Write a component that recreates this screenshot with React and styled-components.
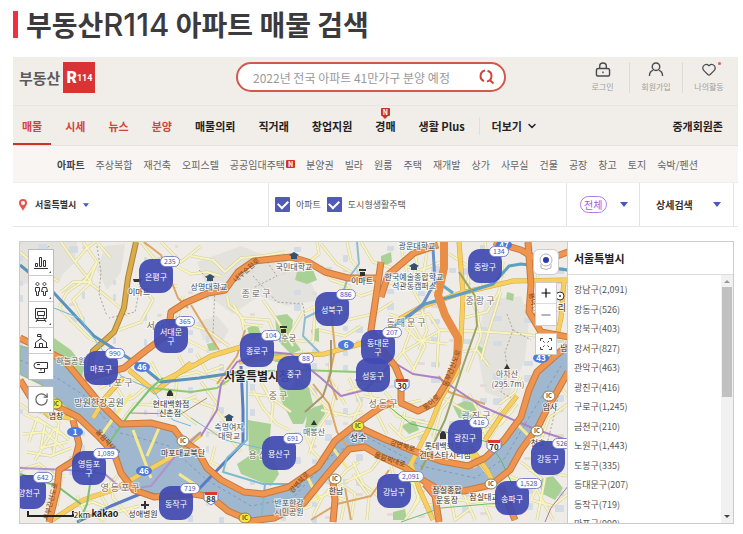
import React from 'react';
import styled, { createGlobalStyle } from 'styled-components';
import { Heart, ChevronDown, Plus, Minus, RotateCw } from 'lucide-react';

const subMenu = ['주상복합', '재건축', '오피스텔', '공공임대주택', '분양권', '빌라', '원룸', '주택', '재개발', '상가', '사무실', '건물', '공장', '창고', '토지', '숙박/펜션'];

const tabs = [
    { name: '매물', hot: true, active: true },
    { name: '시세', hot: true },
    { name: '뉴스', hot: true },
    { name: '분양', hot: true },
    { name: '매물의뢰' },
    { name: '직거래' },
    { name: '창업지원' },
    { name: '경매', isNew: true },
    { name: '생활 Plus' },
];

const districts = [
    ['강남구', '2,091'], ['강동구', '526'], ['강북구', '403'], ['강서구', '827'], ['관악구', '463'],
    ['광진구', '416'], ['구로구', '1,245'], ['금천구', '210'], ['노원구', '1,443'], ['도봉구', '335'],
    ['동대문구', '207'], ['동작구', '719'], ['마포구', '990'],
];

// x, y are the top left corner of the marker on the map
const markers = [
    { name: '은평구', count: '235', x: 119, y: 17 },
    { name: '서대문구', count: '365', x: 134, y: 77 },
    { name: '마포구', count: '990', x: 64, y: 109 },
    { name: '성북구', count: '886', x: 295, y: 50 },
    { name: '종로구', count: '104', x: 220, y: 91 },
    { name: '중구', count: '88', x: 257, y: 114 },
    { name: '성동구', x: 336, y: 116 },
    { name: '동대문구', count: '207', x: 341, y: 88 },
    { name: '중랑구', count: '134', x: 448, y: 7 },
    { name: '영등포구', count: '1,089', x: 52, y: 209 },
    { name: '양천구', count: '642', x: -8, y: 233 },
    { name: '동작구', count: '719', x: 139, y: 244 },
    { name: '용산구', count: '691', x: 242, y: 194 },
    { name: '광진구', count: '416', x: 428, y: 178 },
    { name: '강동구', count: '526', x: 511, y: 199 },
    { name: '강남구', count: '2,091', x: 357, y: 232 },
    { name: '송파구', count: '1,528', x: 475, y: 239 },
];

const parks = [
    'M53 338L70 350L84 368L80 378L56 362L50 352Z',
    'M247 420L270 424L268 448L278 474L270 486L240 474L236 464L248 456Z',
    'M296 378L308 388L312 404L302 424L292 424L280 400L278 384L290 388Z',
    'M274 316L286 314L292 320L290 336L300 350L290 354L276 340Z',
    'M246 328L256 324L260 334L250 340Z',
    'M296 272L312 270L316 280L306 284L294 280Z',
    'M307 410L322 404L324 414L312 432L304 428Z',
    'M452 406L464 401L477 404L472 418L458 418Z',
    'M536 480L552 476L562 488L554 500L542 494Z',
    'M380 256L390 252L391 262L384 266L380 264Z',
    'M506 292L513 294L512 301L505 299Z',
    'M477 345L484 350L482 355L477 352Z',
    'M392 512L404 509L406 520L392 520Z',
    'M88 422L102 424L110 432L100 438L90 432Z',
    'M400 426L414 420L418 430L408 434Z',
    'M206 344L214 342L216 350L208 351Z',
    'M176 488L188 482L190 490L180 494Z',
    'M270 354L280 352L284 362L274 362Z',
    'M310 330L318 328L318 342L312 340Z',
    'M438 458L452 460L470 466L456 470L440 464Z',
];

const hills = [
    'M19 242L76 242L74 262L62 274L58 282L19 284Z',
    'M196 262L240 246L280 262L306 274L318 300L286 306L258 296L232 314L210 298Z',
    'M484 300L520 296L528 320L524 360L506 400L484 392L476 350Z',
    'M104 246L124 244L120 272L106 290L96 270Z',
    'M196 322L216 316L228 330L220 344L202 340Z',
];

const river = 'M19 346L42 352L62 364L78 380L98 402L120 424L150 425L172 431L182 444L194 452L204 468L220 482L243 493L260 494L288 488L316 468L334 441L356 426L382 438L412 451L442 461L467 467L484 459L503 441L520 417L527 392L534 374L545 362L567 348V375L556 390L546 408L536 428L519 452L509 470L490 485L463 490L437 488L422 480L403 467L380 457L362 447L350 450L324 477L303 503L273 517L250 519L227 510L210 496L190 494L153 496L133 488L121 472L113 452L97 434L77 415L53 396L40 384L19 374Z';

const lanes = [
    'M60 242L74 262L90 282L72 300L82 320', 'M74 262L86 248L94 242', 'M82 242L96 262L88 282L110 300L128 316', 'M96 262L84 280L66 292L58 308',
    'M110 258L96 242', 'M88 282L72 282L60 292', 'M58 308L88 338L104 346', 'M118 330L140 322L152 300L140 284L150 262', 'M140 242L156 262L150 284L176 286',
    'M160 242L180 262L200 246', 'M168 262L190 274L206 272L220 276', 'M19 252L40 270L58 282', 'M182 296L176 320L186 340L206 350', 'M190 325L206 330L228 346',
    'M190 256L212 260L224 272L240 258L262 256L284 252', 'M226 296L228 306L240 316L244 334', 'M232 304L244 324L262 326', 'M316 242L318 254L308 262', 'M320 266L330 280L348 286L342 318',
    'M262 300L276 320L292 346', 'M290 340L312 342L314 308L326 296', 'M288 336L302 312L320 304', 'M300 350L304 380L318 400L336 416', 'M330 350L328 378L344 404', 'M240 318L268 320L276 340',
    'M340 286L360 296L378 290', 'M346 320L372 314L392 302', 'M320 244L336 264L350 272', 'M346 242L350 260L364 276', 'M360 242L372 262L392 268', 'M318 330L344 336L360 326',
    'M388 314L410 322L424 346L410 374', 'M398 320L416 340L446 344', 'M386 370L402 352L440 330L478 332', 'M404 318L428 314L438 330L436 368', 'M410 330L402 352L414 370',
    'M420 306L426 330L418 350', 'M386 284L414 278L436 286', 'M396 264L420 270L440 262', 'M412 242L416 264L410 286L420 304', 'M400 248L406 272', 'M426 252L422 276L434 292',
    'M462 318L486 312L498 292L502 262', 'M466 292L476 312L480 336L466 372', 'M458 330L520 334L567 340', 'M484 242L486 258L504 276', 'M500 292L488 330L480 360',
    'M536 272L540 300L560 312', 'M458 352L476 350L488 366', 'M448 254L470 268L484 286', 'M470 256L466 290',
    'M23 414L44 424L40 448L66 442', 'M28 442L36 418L60 434', 'M34 460L54 428L68 440', 'M22 434L44 432L62 448', 'M26 452L50 456L70 448', 'M40 412L58 422L52 456',
    'M19 470L38 464L60 480L56 506', 'M36 506L42 480L64 476', 'M76 496L84 512L104 520', 'M66 508L92 502L116 512L138 506', 'M98 492L106 506L100 522', 'M110 478L112 498L132 520',
    'M116 476L104 492L88 496', 'M118 446L134 448L156 472L184 492', 'M130 442L148 460L134 480', 'M140 438L170 474L160 490', 'M122 450L166 458L148 478', 'M126 460L158 466',
    'M98 388L122 378L150 386L176 378', 'M108 406L132 398L148 384', 'M122 420L134 404L170 406L196 396', 'M150 400L170 418L166 388', 'M176 382L172 406L196 424', 'M112 380L124 402',
    'M192 400L214 408L232 430L240 426', 'M200 382L216 404L210 420', 'M206 430L230 440L240 452', 'M214 446L210 462L226 470', 'M252 390L262 408L276 424L288 430', 'M248 394L268 396L290 412',
    'M260 382L272 404L270 422', 'M304 434L312 452L322 462', 'M336 386L330 410L316 430L308 454', 'M320 410L348 416L362 412', 'M346 392L366 386L372 400', 'M348 378L360 404L352 420',
    'M362 396L382 400L396 416L430 424', 'M374 410L386 434', 'M384 392L396 406L420 400', 'M388 424L404 440L424 432', 'M404 412L398 436',
    'M276 500L290 514L310 506', 'M304 504L326 494L344 500L340 520', 'M312 516L322 496L340 482', 'M326 492L346 470L358 462', 'M340 484L354 494L350 520', 'M352 462L362 484L380 498', 'M344 482L370 470L378 460',
    'M366 520L368 496L352 474', 'M390 466L394 480L414 484', 'M410 474L418 500L404 520', 'M432 488L440 520', 'M448 490L454 520L470 508', 'M462 492L474 520', 'M422 506L460 500L494 506', 'M470 490L484 506L490 520', 'M420 492L410 512',
    'M436 394L466 412L490 418', 'M468 394L478 412L486 440', 'M480 432L500 424L516 404', 'M484 446L496 426L512 410', 'M496 430L486 424L500 408', 'M498 404L514 392L520 376', 'M454 392L440 410L432 438', 'M474 420L480 448',
    'M567 404L548 418L540 440', 'M560 388L567 396', 'M520 462L540 478L530 500', 'M528 470L567 476', 'M530 500L552 506L567 494', 'M508 476L534 486L552 520', 'M544 478L536 520', 'M19 404L30 412',
    'M100 360L96 384', 'M150 362L160 380L196 372L226 384', 'M178 356L186 372', 'M196 354L206 372L222 366',
];

const yellowRoads = [
    'M160 382L190 367L210 356L240 347', 'M238 362L290 356L323 354L352 346L380 338L400 318L420 307L460 293L512 281L567 280',
    'M458 242L462 294L460 340L456 372L440 398L430 424L410 464L418 488L432 520', 'M563 281L560 318L556 336', 'M190 363L154 392L140 380L128 370',
    'M122 378L104 398L92 418', 'M200 434L172 456L140 474L112 490L82 500L48 522', 'M474 468L470 448L486 470L494 486', 'M516 396L500 416L484 440',
    'M36 402L48 416L70 418',
];

const orangeRoads = [
    'M19 338L43 350L63 360L78 378L97 401L120 424L150 423L173 429L182 441L196 450L206 468L220 480L243 492L262 494L288 487L317 467L334 441L357 423L380 407L392 402',
    'M355 426L381 438L410 450L440 461L467 466L484 458L503 440L520 417L528 390L536 372L552 358L567 345',
    'M19 380L30 398L53 405L77 417L98 437L113 453L120 473L133 490L153 497L193 494L210 497L227 511L250 521L273 518L303 503L324 477L348 449L364 447L381 457L403 467L423 481L437 489L463 491L490 485L509 470L520 450L537 427L547 407L557 390L567 372',
    'M84 378L123 368L143 352L167 334L170 312L184 303L207 293L224 290L237 272L253 261L290 257L307 262L324 272L347 278L380 278',
    'M380 262L376 290L370 330L378 346L394 366L400 380L400 403L417 411L433 403L446 382L456 362L457 338L444 315L437 295L443 268L443 242',
    'M380 297L387 275L413 253L437 245', 'M527 242L530 285L528 312L540 332L567 337', 'M493 242L520 250L540 262L567 252',
    'M72 420L78 444L74 460L58 470L56 490L48 522', 'M332 482L334 500L332 522', 'M424 484L434 496L438 522', 'M500 486L514 520',
];

const thinRoads = [
    'M143 242L160 255L177 298L187 308', 'M190 305L204 328L218 350', 'M312 384L328 404L336 432L350 452', 'M244 330L236 356L216 384', 'M286 372L300 384',
    'M336 400L328 378L334 350L330 310', 'M354 380L380 382', 'M310 520L336 504L370 496L388 470', 'M344 488L350 520', 'M438 376L448 392L484 404',
];

const railways = [
    { d: 'M19 265L53 293L93 336L143 368L160 382L198 378L240 372', color: '#5c93b8', w: 3 },
    { d: 'M53 308L78 318L100 348L120 376L152 390L172 420L190 426', color: '#6fbbe6', w: 1 },
    { d: 'M567 270L520 264L508 266L492 284L460 294L424 304L404 318L384 332', color: '#5f9fc0', w: 3 },
    { d: 'M432 248L434 282L422 304L406 318', color: '#6c91c9', w: 3 },
    { d: 'M434 280L452 293', color: '#64a8c8', w: 3 },
    { d: 'M240 366L242 410L242 443L223 463L197 490', color: '#5b7cc4', w: 3 },
    { d: 'M246 380L246 440L226 458L222 472L262 484L300 484', color: '#7fbad0', w: 2 },
    { d: 'M264 484L260 522', color: '#84b9ce', w: 2 },
    { d: 'M356 242L358 264L346 280L340 300L304 318L302 336L318 352', color: '#8fbccb', w: 2 },
    { d: 'M76 522L110 506L144 492L170 500', color: '#5b7cc4', w: 3 },
    { d: 'M190 418L224 440L268 450', color: '#7ab8d6', w: 1 },
    { d: 'M162 378L150 388L128 414L110 440L90 478L86 504L78 522', color: '#7bc274', w: 2 },
    { d: 'M19 474L56 486L80 504', color: '#77bd70', w: 2 },
    { d: 'M150 388L190 392L216 388L240 372L300 370L356 372', color: '#8ecb6c', w: 2 },
    { d: 'M382 402L410 424L487 442L500 460L512 486', color: '#5fb964', w: 1 },
    { d: 'M400 522L440 508L510 502', color: '#6fbf72', w: 1 },
    { d: 'M200 436L216 410L220 384L236 362L268 352L290 354L320 378L340 396L364 390L392 362L412 374L438 378L480 406L536 430L567 440', color: '#ab83c5', w: 2 },
    { d: 'M19 468L68 470L104 474L122 490L150 486L176 454L200 432', color: '#b093c9', w: 2 },
    { d: 'M567 486L550 508L544 522', color: '#a678a8', w: 1 },
    { d: 'M458 272L474 296L476 326L462 366L444 420L420 470', color: '#9aa36a', w: 2 },
    { d: 'M330 340L330 372L322 396L304 412', color: '#a6956e', w: 2 },
    { d: 'M130 413L180 414L206 398', color: '#a88e70', w: 1 },
];

const trails = [
    'M96 246L100 272L98 294L106 316', 'M140 282L134 312L108 318', 'M198 270L214 286L212 334', 'M252 276L276 302L302 304L304 318', 'M506 314L512 330L504 352L506 366',
    'M512 330L530 340', 'M266 262L276 276L252 288', 'M48 246L34 262L40 282', 'M559 388L552 420L544 452', 'M508 368L500 392L510 398',
];

const riverBorder = 'M19 360L50 374L84 396L116 432L168 446L206 480L250 506L292 498L330 456L364 436L420 466L474 478L504 458L530 414L560 366';

const bridges = 'M98 438L130 394M150 478L132 430M146 456L158 428M178 474L196 486M318 500L306 476M346 468L332 448M408 466L416 452M494 484L478 462M530 438L516 424';

const schoolColor = '#39516f';
const guColor = '#77706c';
const hillColor = '#66645f';
const parkColor = '#49605c';

const places = [
    { t: '국민대학교', x: 293, y: 270, c: schoolColor },
    { t: '상명대학교', x: 208, y: 290, c: schoolColor },
    { t: '광운대학교', x: 416, y: 249, c: schoolColor },
    { t: '한국예술종합학교', x: 413, y: 280, c: schoolColor },
    { t: '석관동캠퍼스', x: 413, y: 289, c: schoolColor },
    { t: '숙명여자', x: 228, y: 430, c: schoolColor },
    { t: '대학교', x: 228, y: 439, c: schoolColor },
    { t: '이마트', x: 138, y: 295 },
    { t: '이마트', x: 361, y: 284 },
    { t: '종 로 구', x: 255, y: 297, c: guColor, s: 9 },
    { t: '중 랑 구', x: 479, y: 304, c: guColor, s: 9 },
    { t: '동 대 문 구', x: 405, y: 326, c: guColor, s: 9 },
    { t: '서 대 문 구', x: 165, y: 329, c: guColor, s: 9 },
    { t: '마 포 구', x: 117, y: 386, c: guColor, s: 9 },
    { t: '영 등 포 구', x: 119, y: 491, c: guColor, s: 9 },
    { t: '중 구', x: 277, y: 399, c: guColor, s: 9 },
    { t: '용 산 구', x: 262, y: 458, c: guColor, s: 9 },
    { t: '성 동 구', x: 382, y: 407, c: guColor, s: 9 },
    { t: '광 진 구', x: 475, y: 419, c: guColor, s: 9 },
    { t: '덕수궁', x: 284, y: 341, c: '#665f58' },
    { t: '아차산', x: 506, y: 377, c: hillColor },
    { t: '(295.7m)', x: 507, y: 387, c: hillColor },
    { t: '매봉산', x: 313, y: 435, c: hillColor },
    { t: '하늘공원', x: 70, y: 364, c: hillColor },
    { t: '망원한강공원', x: 98, y: 406, c: parkColor, s: 9 },
    { t: '염창', x: 55, y: 419 },
    { t: '현대백화점', x: 170, y: 407 },
    { t: '신촌점', x: 169, y: 416 },
    { t: '마포대교북단', x: 182, y: 456 },
    { t: '성수', x: 357, y: 441, s: 9 },
    { t: '한남', x: 335, y: 494 },
    { t: '반포한강', x: 288, y: 506, c: parkColor },
    { t: '시민공원', x: 288, y: 515, c: parkColor },
    { t: '롯데백화점', x: 442, y: 449 },
    { t: '건대스타시티점', x: 444, y: 458 },
    { t: '잠실종합', x: 446, y: 493 },
    { t: '운동장', x: 446, y: 503 },
    { t: '잠실대교', x: 483, y: 500 },
    { t: '암사', x: 549, y: 410 },
    { t: '천호', x: 537, y: 446 },
    { t: '성애병원', x: 142, y: 517 },
    { t: '구리시', x: 561, y: 311, s: 9 },
    { t: '남', x: 563, y: 351 },
];

const roadNames = [
    { t: '내부순환로', x: 247, y: 272, r: -42 },
    { t: '강변북로', x: 300, y: 484, r: -48 },
    { t: '강변북로', x: 401, y: 448, r: 18 },
    { t: '올림픽대로', x: 388, y: 462, r: 18 },
    { t: '올림픽대로', x: 105, y: 444, r: 48 },
    { t: '동부간선도로', x: 453, y: 369, r: -70 },
    { t: '동이로', x: 432, y: 404, r: -42 },
    { t: '서부간선도로', x: 52, y: 502, r: -75 },
    { t: '용마산로', x: 531, y: 306, r: 75 },
];

const routeNumbers = [
    { n: 46, x: 141, y: 367 }, { n: 6, x: 345, y: 345 }, { n: 1, x: 74, y: 432 },
    { n: 46, x: 143, y: 471 }, { n: 47, x: 503, y: 245 }, { n: 43, x: 540, y: 358 },
];

const expressways = [{ n: 88, x: 210, y: 498 }, { n: 30, x: 401, y: 385 }, { n: 70, x: 493, y: 446 }];

const interchanges = [
    { x: 55, y: 404, gold: true }, { x: 357, y: 426, gold: true }, { x: 244, y: 518, gold: true },
    { x: 182, y: 441 }, { x: 334, y: 479 }, { x: 548, y: 396 }, { x: 536, y: 431 }, { x: 490, y: 484 },
];

// faint building blocks under the streets
const blocks = Array.from({ length: 260 }, (_, i) => ({
    x: 19 + ((i * 137 + (i % 7) * 31) % 548),
    y: 242 + ((i * 89 + (i % 5) * 17) % 281),
    w: 3 + (i % 4) * 2,
    h: 3 + (i % 3) * 2,
}));

const Paths = ({ list, ...rest }) => (
    <g fill="none" strokeLinejoin="round" {...rest}>
        {list.map((d, key) => <path key={key} d={d} />)}
    </g>
);

const MapDrawing = () => (
    <MapSvg width="548" height="281" viewBox="19 242 548 281" aria-hidden="true">
        <rect x="19" y="242" width="548" height="281" fill="#efece7" />
        {hills.map((d, key) => <path key={key} d={d} fill="#e4e2dc" />)}
        {blocks.map((b, key) => (
            <rect key={key} x={b.x} y={b.y} width={b.w} height={b.h} rx="1" fill={key % 3 ? '#d3dce4' : '#e4dbd9'} />
        ))}
        {parks.map((d, key) => <path key={key} d={d} fill="#a9d095" />)}
        <Paths list={lanes} stroke="#cfccb2" strokeWidth="3" />
        <Paths list={lanes} stroke="#f8f4bc" strokeWidth="2" />
        <path d={river} fill="#9fb8d0" stroke="#9ebb98" strokeWidth="2" />
        <path d={riverBorder} fill="none" stroke="#8199b0" strokeDasharray="3 3" />
        <Paths list={trails} stroke="#aaa398" strokeDasharray="2 2" />
        <path d={bridges} stroke="#f5e98d" strokeWidth="3" />
        <Paths list={thinRoads} stroke="#dca766" strokeWidth="2" />
        <Paths list={yellowRoads} stroke="#cfa843" strokeWidth="5" />
        <Paths list={yellowRoads} stroke="#f7ce60" strokeWidth="4" />
        <path d="M135 242L127 278L123 308L113 332L92 351L88 372" fill="none" stroke="#a88440" strokeWidth="6" />
        <path d="M135 242L127 278L123 308L113 332L92 351L88 372" fill="none" stroke="#dcac4b" strokeWidth="4" />
        {railways.map((r, key) => <path key={key} d={r.d} fill="none" stroke={r.color} strokeWidth={r.w} strokeLinejoin="round" />)}
        <Paths list={orangeRoads} stroke="#c47a40" strokeWidth="7" />
        <Paths list={orangeRoads} stroke="#f0954f" strokeWidth="5" />
        <path d="M443 242V268L437 295L444 315L457 338L456 362L446 382" fill="none" stroke="#e98e48" strokeWidth="8" strokeLinejoin="round" />
        {roadNames.map((r, key) => (
            <RoadName key={key} transform={`rotate(${r.r} ${r.x} ${r.y})`} x={r.x} y={r.y}>{r.t}</RoadName>
        ))}
        {places.map((p, key) => (
            <Place key={key} x={p.x} y={p.y} fill={p.c || '#333'} $size={p.s || 8}>{p.t}</Place>
        ))}
        <Place x="256" y="381" fill="#222" $size={12} $bold>서울특별시청</Place>
        <g fill="#35506e">
            {[[293, 255], [209, 277], [413, 266], [228, 417]].map(([x, y]) => (
                <path key={x} d={`M${x - 5} ${y}L${x} ${y - 3}L${x + 5} ${y}L${x + 3} ${y + 1}V${y + 4}H${x - 3}V${y + 1}Z`} />
            ))}
        </g>
        <path d="M132 279H142L139 282H133ZM279 326H286V328H279ZM280 329H285V333H280ZM358 269H365V271H358ZM359 272H364V276H359ZM503 369L506 364L509 369ZM310 425L313 420L316 425ZM166 394Q169 386 172 394V396H166ZM439 434Q442 428 445 434V439H439ZM140 504H143V501H145V504H148V506H145V509H143V506H140Z" fill="#333" />
        <circle cx="559" cy="296" r="4" fill="#fff" stroke="#333" />
        <circle cx="559" cy="296" r="1" fill="#333" />
        {routeNumbers.map((r, key) => (
            <g key={key}>
                <ellipse cx={r.x} cy={r.y} rx="8" ry="5" fill="#4b79e0" />
                <RouteNumber x={r.x} y={r.y + 3} fill="#fff">{r.n}</RouteNumber>
            </g>
        ))}
        {expressways.map((r, key) => (
            <g key={key}>
                <path d={`M${r.x - 7} ${r.y - 5}H${r.x + 7}V${r.y + 2}L${r.x} ${r.y + 7}L${r.x - 7} ${r.y + 2}Z`} fill="#fff" stroke="#6b83c4" />
                <rect x={r.x - 6} y={r.y - 6} width="12" height="3" fill="#dc3a2c" />
                <RouteNumber x={r.x} y={r.y + 4} fill="#333">{r.n}</RouteNumber>
            </g>
        ))}
        {interchanges.map((r, key) => (
            <g key={key}>
                <ellipse cx={r.x} cy={r.y} rx="6" ry="5" fill={r.gold ? '#f5e73e' : '#fff'} stroke="#8b7d4d" />
                <RouteNumber x={r.x} y={r.y + 2} fill="#554b2a" $small>IC</RouteNumber>
            </g>
        ))}
        <path d="M27 511V516H72V511" fill="none" stroke="#222" strokeWidth="2" />
        <Place x="81" y="518" fill="#222" $size={8}>2km</Place>
        <Place x="104" y="517" fill="#222" $size={9} $bold>kakao</Place>
    </MapSvg>
);

const ToolIcon = ({ d }) => (
    <svg width="16" height="16" viewBox="0 0 16 16" fill="none" stroke="#333" aria-hidden="true">
        <path d={d} />
    </svg>
);

const tools = [
    { name: '시세', d: 'M1 13.5H15M2.5 8.5H4.5V11.5H2.5ZM6.5 2.5H8.5V11.5H6.5ZM10.5 5.5H12.5V11.5H10.5Z' },
    { name: '학군', d: 'M4.5 1.5A1.5 1.5 0 1 1 4.4 1.5M2.5 6.5H6.5V10.5H5.5V14.5H3.5V10.5H2.5ZM11.5 1.5A1.5 1.5 0 1 1 11.4 1.5M9.5 6.5H13.5L14.5 10.5H12.5V14.5H10.5V10.5H8.5Z' },
    { name: '교통', d: 'M2.5 1.5H13.5V11.5H2.5ZM4.5 4.5H11.5V8.5H4.5ZM5 10H6M10 10H11M4.5 12L3 15M11.5 12L13 15M4 13.5H12' },
    { name: '편의시설', d: 'M1 14.5H15M2.5 14V9.5L8 5.5L13.5 9.5V14M6.5 14V10.5H9.5V14M8 5V1.5H4.5V3.5H8' },
    { name: '거리뷰', d: 'M4 3.5H14.5V9.5H4A3 3 0 0 1 4 3.5M4 5.5H7M11.5 10V13.5H5.5M8 9.5V11.5' },
];

const NewMark = () => <NewBox>N</NewBox>;

const Arrow = ({ small }) => (
    <ArrowSvg width={small ? 6 : 8} height={small ? 4 : 5} viewBox="0 0 8 5" aria-hidden="true"><path d="M0 0H8L4 5Z" fill="#4957c4" /></ArrowSvg>
);

export default function App() {
    return (
        <Page>
            <GlobalStyle />
            <Title><span>부동산<Latin>R114</Latin> 아파트 매물 검색</span></Title>
            <Header>
                <TopRow>
                    <Logo href="#">부동산<LogoBox><b>R</b>114</LogoBox></Logo>
                    <Search>
                        <SearchInput type="text" aria-label="검색어" placeholder="2022년 전국 아파트 41만가구 분양 예정" />
                        <SearchButton type="button" aria-label="검색">
                            <svg width="16" height="16" viewBox="0 0 16 16" fill="none" stroke="#cf4435" strokeWidth="2">
                                <path d="M6 1.6A5.5 5.5 0 0 0 5 12.1M8.5 1.7A5.5 5.5 0 0 1 8 12.4M10.8 11L14.5 14.5" />
                            </svg>
                        </SearchButton>
                    </Search>
                    <UserMenu>
                        <UserLink href="#">
                            <svg width="16" height="16" viewBox="0 0 16 16" fill="none" stroke="#4a4a50" strokeWidth="1.5">
                                <rect x="1" y="7" width="14" height="8" rx="2" />
                                <path d="M4.5 7V4A3.5 3 0 0 1 11.5 4V7M8 10V12" />
                            </svg>
                            로그인
                        </UserLink>
                        <UserLink href="#">
                            <svg width="16" height="16" viewBox="0 0 16 16" fill="none" stroke="#4a4a50" strokeWidth="1.5">
                                <circle cx="8" cy="5" r="4" />
                                <path d="M1 15Q1 10 5 9M15 15Q15 10 11 9" />
                            </svg>
                            회원가입
                        </UserLink>
                        <UserLink href="#">
                            <Heart size={18} height={16} color="#4a4a50" strokeWidth={2} />
                            나의활동
                            <RedDot />
                        </UserLink>
                    </UserMenu>
                </TopRow>
                <NavRow>
                    {tabs.map((tab) => (
                        <Tab key={tab.name} href="#" $hot={tab.hot} $active={tab.active}>
                            {tab.name}
                            {tab.isNew && <Balloon><NewMark /></Balloon>}
                        </Tab>
                    ))}
                    <More type="button">더보기 <ChevronDown size={12} strokeWidth={3} /></More>
                    <AgentLink href="#">중개회원존</AgentLink>
                </NavRow>
            </Header>
            <SubNav>
                <SubLink href="#" $active>아파트</SubLink>
                {subMenu.map((name) => (
                    <SubLink key={name} href="#">
                        {name}
                        {name === '공공임대주택' && <NewMark />}
                    </SubLink>
                ))}
            </SubNav>
            <Filters>
                <Filter>
                    <svg width="8" height="12" viewBox="0 0 8 12" aria-hidden="true">
                        <path d="M4 0A4 4 0 0 1 8 4C8 7 5 9 4 12C3 9 0 7 0 4A4 4 0 0 1 4 0Z" fill="#e8524c" />
                        <circle cx="4" cy="4" r="2" fill="#fff" />
                    </svg>
                    <RegionSelect aria-label="지역"><option>서울특별시</option></RegionSelect>
                    <Arrow small />
                </Filter>
                <Filter>
                    <CheckLabel><CheckBox type="checkbox" defaultChecked />아파트</CheckLabel>
                    <CheckLabel><CheckBox type="checkbox" defaultChecked />도시형생활주택</CheckLabel>
                </Filter>
                <Filter $spread>
                    <PillSelect aria-label="거래유형"><option>전체</option></PillSelect>
                    <Arrow />
                </Filter>
                <Filter $spread $last>
                    <BareSelect aria-label="상세검색"><option>상세검색</option></BareSelect>
                    <Arrow />
                </Filter>
            </Filters>
            <Main>
                <MapArea>
                    <MapDrawing />
                    {markers.map((m) => (
                        <Marker key={m.name} type="button" style={{ left: m.x, top: m.y }}>
                            {m.name}
                            {m.count && <Count>{m.count}</Count>}
                        </Marker>
                    ))}
                    <LeftTools>
                        <ToolGroup>
                            {tools.map((tool, key) => (
                                <Tool key={tool.name} type="button" aria-label={tool.name} $corner={key < 4}><ToolIcon d={tool.d} /></Tool>
                            ))}
                        </ToolGroup>
                        <ToolGroup>
                            <Tool type="button" aria-label="새로고침"><RotateCw size={15} strokeWidth={2} color="#666" /></Tool>
                        </ToolGroup>
                    </LeftTools>
                    <RightTools>
                        <RoundTool type="button" aria-label="로드뷰">
                            <svg width="16" height="18" viewBox="0 0 16 18" fill="none" stroke="#b5b5b5">
                                <circle cx="8" cy="7" r="6" />
                                <path d="M3 11V15Q8 18 13 15V11" />
                                <circle cx="8" cy="7" r="3" fill="#2b3ca8" stroke="none" />
                            </svg>
                        </RoundTool>
                        <ZoomGroup>
                            <ZoomTool type="button" aria-label="확대"><Plus size={14} strokeWidth={2} /></ZoomTool>
                            <ZoomTool type="button" aria-label="축소"><Minus size={14} strokeWidth={1} /></ZoomTool>
                        </ZoomGroup>
                        <ZoomGroup>
                            <ZoomTool type="button" aria-label="전체화면">
                                <svg width="12" height="12" viewBox="0 0 12 12" fill="none" stroke="#444">
                                    <path d="M.5 3V.5H3M9 .5H11.5V3M11.5 9V11.5H9M3 11.5H.5V9M3 3L4.5 4.5M9 3L7.5 4.5M9 9L7.5 7.5M3 9L4.5 7.5" />
                                </svg>
                            </ZoomTool>
                        </ZoomGroup>
                    </RightTools>
                </MapArea>
                <Panel>
                    <PanelTitle>서울특별시</PanelTitle>
                    <PanelBody>
                        <List>
                            {districts.map(([name, count]) => (
                                <Item key={name}><a href="#">{name}({count})</a></Item>
                            ))}
                        </List>
                        <Rail aria-hidden="true">
                            <RailArrow $up />
                            <Thumb />
                            <RailArrow />
                        </Rail>
                    </PanelBody>
                </Panel>
            </Main>
        </Page>
    );
}

const GlobalStyle = createGlobalStyle`
    * {
        box-sizing: border-box;
    }
    body {
        margin: 0;
        background: #fff;
    }
    body, button, input, select {
        font-family: 'Noto Sans CJK KR', 'Noto Sans', sans-serif;
    }
    a {
        color: inherit;
        text-decoration: none;
    }
    button {
        padding: 0;
        border: 0;
        background: none;
        cursor: pointer;
    }
`;
const Page = styled.div`
    padding: 0 5px 11px 13px;
`;
const Title = styled.h1`
    display: flex;
    align-items: center;
    gap: 8px;
    margin: 0;
    padding: 11px 0 19px;
    font-size: 28px;
    line-height: 27px;
    font-weight: 700;
    color: #3b3a3c;
    white-space: nowrap;
    &::before {
        content: '';
        width: 5px;
        height: 27px;
        background: #f1303f;
    }
`;
const Latin = styled.span`
    font-family: Inter, sans-serif;
    font-size: 31px;
    font-weight: 500;
    line-height: 0;
`;
const Header = styled.header`
    background: #f1eeea;
`;
const TopRow = styled.div`
    display: grid;
    grid-template-columns: 217px 270px 1fr;
    height: 49px;
    padding: 5px 3px 0 6px;
    border-bottom: 1px solid #e8e5e2;
`;
const Logo = styled.a`
    display: flex;
    align-items: center;
    gap: 3px;
    height: 31px;
    font-size: 15px;
    font-weight: 700;
    color: #5b5b5c;
`;
const LogoBox = styled.span`
    display: flex;
    align-items: center;
    justify-content: center;
    width: 32px;
    height: 31px;
    background: #d93336;
    color: #fff;
    font-family: Roboto, sans-serif;
    font-size: 9px;
    font-weight: 700;
    b {
        font-size: 16px;
    }
`;
const Search = styled.form`
    display: flex;
    align-items: center;
    height: 30px;
    padding: 0 9px 0 15px;
    border: 2px solid #cf5a4b;
    border-radius: 15px;
    background: #fff;
`;
const SearchInput = styled.input`
    flex: 1;
    min-width: 0;
    padding: 0;
    border: 0;
    outline: 0;
    background: none;
    font-size: 12px;
    &::placeholder {
        color: #999;
    }
`;
const SearchButton = styled.button`
    display: flex;
`;
const UserMenu = styled.div`
    display: flex;
    justify-content: flex-end;
`;
const UserLink = styled.a`
    position: relative;
    display: flex;
    flex-direction: column;
    align-items: center;
    gap: 4px;
    width: 53px;
    height: 31px;
    font-size: 8px;
    line-height: 12px;
    color: #a29d9a;
    & + & {
        border-left: 1px solid #dedad7;
    }
`;
const RedDot = styled.i`
    position: absolute;
    top: 0;
    right: 14px;
    width: 3px;
    height: 3px;
    border-radius: 50%;
    background: #f25555;
`;
const NavRow = styled.nav`
    display: flex;
    gap: 5px;
    height: 40px;
    border-bottom: 1px solid #e5e2df;
    font-size: 11px;
    font-weight: 700;
    white-space: nowrap;
`;
const Tab = styled.a`
    position: relative;
    display: flex;
    align-items: center;
    padding: 2px 9px 0;
    border-bottom: 2px solid ${({ $active }) => ($active ? '#cf3226' : 'transparent')};
    color: ${({ $hot }) => ($hot ? '#d3453c' : '#222')};
`;
const NewBox = styled.span`
    display: inline-flex;
    align-items: center;
    justify-content: center;
    width: 9px;
    height: 8px;
    border-radius: 1px;
    background: #cf3226;
    color: #fff;
    font-size: 7px;
    line-height: 8px;
    font-weight: 700;
`;
const Balloon = styled.span`
    position: absolute;
    top: 2px;
    left: 0;
    right: 0;
    display: flex;
    flex-direction: column;
    align-items: center;
    &::after {
        content: '';
        border: 3px solid transparent;
        border-top-color: #cf3226;
        border-bottom: 0;
    }
`;
const More = styled.button`
    display: flex;
    align-items: center;
    align-self: center;
    gap: 4px;
    height: 18px;
    padding-left: 12px;
    border-left: 1px solid #e2dfdb;
    font-size: 11px;
    font-weight: 700;
    color: #222;
`;
const AgentLink = styled.a`
    align-self: center;
    margin-left: auto;
    padding-right: 15px;
    color: #222;
`;
const SubNav = styled.nav`
    display: flex;
    align-items: center;
    gap: 11px;
    height: 36px;
    padding-left: 44px;
    background: #f8f5f3;
    font-size: 10px;
    white-space: nowrap;
`;
const SubLink = styled.a`
    display: flex;
    align-items: center;
    gap: 1px;
    font-weight: ${({ $active }) => ($active ? 700 : 400)};
    color: ${({ $active }) => ($active ? '#444' : '#666')};
`;
const Filters = styled.div`
    display: grid;
    grid-template-columns: 256px 1fr 73px 94px;
    height: 45px;
    padding-right: 4px;
    border-top: 1px solid #eee;
    border-bottom: 1px solid #e6e6e6;
`;
const Filter = styled.div`
    display: flex;
    align-items: center;
    justify-content: ${({ $spread }) => ($spread ? 'space-between' : 'flex-start')};
    gap: 6px;
    padding: 0 ${({ $last }) => ($last ? 12 : 11)}px 0 ${({ $last, $spread }) => ($last ? 16 : $spread ? 13 : 6)}px;
    border-right: 1px solid #e4e4e4;
`;
const BareSelect = styled.select`
    appearance: none;
    padding: 0;
    border: 0;
    background: none;
    color: #333;
    font-size: 10px;
    font-weight: 700;
`;
const RegionSelect = styled(BareSelect)`
    margin-left: 2px;
    font-size: 9px;
`;
const PillSelect = styled(BareSelect)`
    height: 17px;
    padding: 0 3px;
    border: 1px solid #b27be0;
    border-radius: 9px;
    color: #a855d8;
    font-weight: 400;
`;
const ArrowSvg = styled.svg`
    flex: none;
`;
const CheckLabel = styled.label`
    display: flex;
    align-items: center;
    gap: 6px;
    font-size: 9px;
    color: #555;
    white-space: nowrap;
`;
const CheckBox = styled.input`
    appearance: none;
    display: flex;
    align-items: center;
    justify-content: center;
    width: 15px;
    height: 15px;
    margin: 0;
    border-radius: 1px;
    background: #4f5bb5;
    &:checked::after {
        content: '';
        width: 8px;
        height: 5px;
        margin-bottom: 2px;
        border: solid #fff;
        border-width: 0 0 2px 2px;
        transform: rotate(-45deg);
    }
`;
const Main = styled.main`
    display: flex;
    height: 283px;
    margin: 14px 4px 0 6px;
    border: 1px solid #ccc;
`;
const MapArea = styled.section`
    position: relative;
    flex: 1;
    min-width: 0;
    overflow: hidden;
    background: #efece7;
`;
const MapSvg = styled.svg`
    display: block;
`;
const Place = styled.text`
    font-size: ${({ $size }) => $size}px;
    font-weight: ${({ $bold }) => ($bold ? 700 : 400)};
    text-anchor: middle;
    paint-order: stroke;
    stroke: #fff;
    stroke-width: 2px;
    stroke-opacity: 0.7;
`;
const RoadName = styled.text`
    font-size: 7px;
    text-anchor: middle;
    fill: #7a4314;
`;
const RouteNumber = styled.text`
    font-size: ${({ $small }) => ($small ? 6 : 8)}px;
    font-weight: 700;
    text-anchor: middle;
`;
const Marker = styled.button`
    position: absolute;
    width: 34px;
    height: 34px;
    padding: 0 3px;
    border-radius: 12px;
    background: rgba(65, 74, 176, 0.93);
    color: #fff;
    font-size: 8px;
    line-height: 9px;
    word-break: break-all;
`;
const Count = styled.span`
    position: absolute;
    top: -3px;
    left: 21px;
    padding: 0 3px;
    border: 1px solid #7d84cb;
    border-radius: 6px;
    background: #fff;
    color: #4a53b0;
    font-size: 7px;
    line-height: 9px;
    white-space: nowrap;
`;
const LeftTools = styled.div`
    position: absolute;
    top: 7px;
    left: 8px;
    display: flex;
    flex-direction: column;
    gap: 6px;
`;
const ToolGroup = styled.div`
    border: 1px solid #bbb;
    background: #fff;
`;
const Tool = styled.button`
    position: relative;
    display: flex;
    align-items: center;
    justify-content: center;
    width: 24px;
    height: 25px;
    & + & {
        height: 26px;
        border-top: 1px solid #ccc;
    }
    &::after {
        content: ${({ $corner }) => ($corner ? "''" : 'none')};
        position: absolute;
        right: 2px;
        bottom: 2px;
        border: 1px solid #555;
        border-top-color: transparent;
        border-left-color: transparent;
    }
`;
const RightTools = styled.div`
    position: absolute;
    top: 7px;
    right: 8px;
    display: flex;
    flex-direction: column;
    align-items: center;
    gap: 7px;
`;
const RoundTool = styled.button`
    display: flex;
    align-items: center;
    justify-content: center;
    width: 26px;
    height: 26px;
    border: 1px solid #ccc;
    border-radius: 6px;
    background: #fff;
`;
const ZoomGroup = styled.div`
    border: 1px solid #ccc;
    background: #fff;
`;
const ZoomTool = styled.button`
    display: flex;
    align-items: center;
    justify-content: center;
    width: 20px;
    height: 20px;
    & + & {
        height: 22px;
        border-top: 1px solid #ddd;
    }
`;
const Panel = styled.aside`
    display: flex;
    flex-direction: column;
    width: 166px;
    border-left: 1px solid #ccc;
    background: #fff;
`;
const PanelTitle = styled.h2`
    flex: none;
    margin: 0;
    padding: 0 6px;
    border-bottom: 1px solid #ddd;
    font-size: 11px;
    line-height: 32px;
    color: #222;
`;
const PanelBody = styled.div`
    display: flex;
    flex: 1;
    min-height: 0;
`;
const List = styled.ul`
    flex: 1;
    overflow: hidden;
    margin: 0;
    padding: 5px 6px;
    list-style: none;
    font-size: 9px;
    color: #555;
`;
const Item = styled.li`
    height: 20px;
    line-height: 19px;
    &:nth-child(even) {
        height: 19px;
    }
`;
const Rail = styled.div`
    display: flex;
    flex-direction: column;
    align-items: center;
    width: 12px;
    padding: 5px 0;
    background: #f1f1f1;
`;
const RailArrow = styled.i`
    border: 3px solid transparent;
    border-bottom: ${({ $up }) => ($up ? '3px solid #999' : '0')};
    border-top: ${({ $up }) => ($up ? '0' : '3px solid #444')};
    margin-top: ${({ $up }) => ($up ? '0' : 'auto')};
`;
const Thumb = styled.div`
    width: 10px;
    height: 110px;
    margin-top: 4px;
    background: #c1c1c1;
`;
